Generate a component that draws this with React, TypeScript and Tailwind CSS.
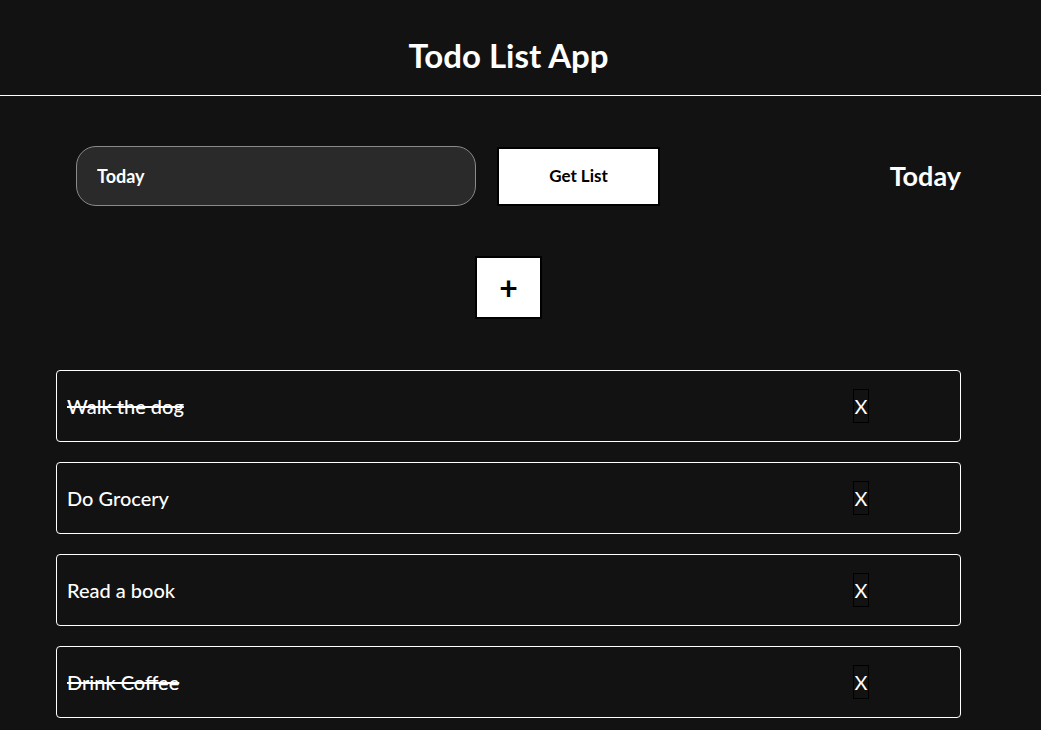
import { useState } from "react";

type Todo = { id: number; text: string; done: boolean };

const initial: Todo[] = [
  { id: 1, text: "Walk the dog", done: true },
  { id: 2, text: "Do Grocery", done: false },
  { id: 3, text: "Read a book", done: false },
  { id: 4, text: "Drink Coffee", done: true },
];

export default function App() {
  const [todos, setTodos] = useState<Todo[]>(initial);
  const [day, setDay] = useState("Today");

  return (
    <div className="min-h-screen bg-[#121212] text-white font-['Lato','Noto_Sans',sans-serif]">
      <header className="flex h-[96px] items-center border-b border-white pt-[16px]">
        <div className="ml-[56px] w-[905px] text-center text-[33px] font-bold">Todo List App</div>
      </header>

      <main className="ml-[56px] w-[905px]">
        <div className="mt-[50px] flex items-center pl-[20px]">
          <input
            value={day}
            onChange={(e) => setDay(e.target.value)}
            className="h-[60px] w-[400px] rounded-[20px] border border-[#8a8a8a] bg-[#2a2a2a] px-[20px] text-[18px] font-bold text-white outline-none"
          />
          <button className="ml-[21px] h-[59px] w-[163px] border-2 border-black bg-white text-[17px] font-bold text-black">
            Get List
          </button>
          <div className="ml-auto text-[27px] font-bold">Today</div>
        </div>

        <div className="mt-[50px] flex justify-center">
          <button className="flex h-[63px] w-[67px] items-center justify-center border-2 border-black bg-white text-[32px] font-bold leading-none text-black">
            +
          </button>
        </div>

        <ul className="mt-[51px] flex flex-col gap-[20px]">
          {todos.map((t) => (
            <li
              key={t.id}
              className="flex h-[72px] items-center rounded-[4px] border border-white pl-[10px]"
            >
              <span
                onClick={() =>
                  setTodos(todos.map((x) => (x.id === t.id ? { ...x, done: !x.done } : x)))
                }
                className={`text-[20px] font-medium ${t.done ? "line-through" : ""}`}
              >
                {t.text}
              </span>
              <button
                onClick={() => setTodos(todos.filter((x) => x.id !== t.id))}
                className="ml-auto mr-[91px] flex h-[34px] w-[16px] items-center justify-center border border-black bg-transparent text-[20px] text-white"
              >
                X
              </button>
            </li>
          ))}
        </ul>
      </main>
    </div>
  );
}
